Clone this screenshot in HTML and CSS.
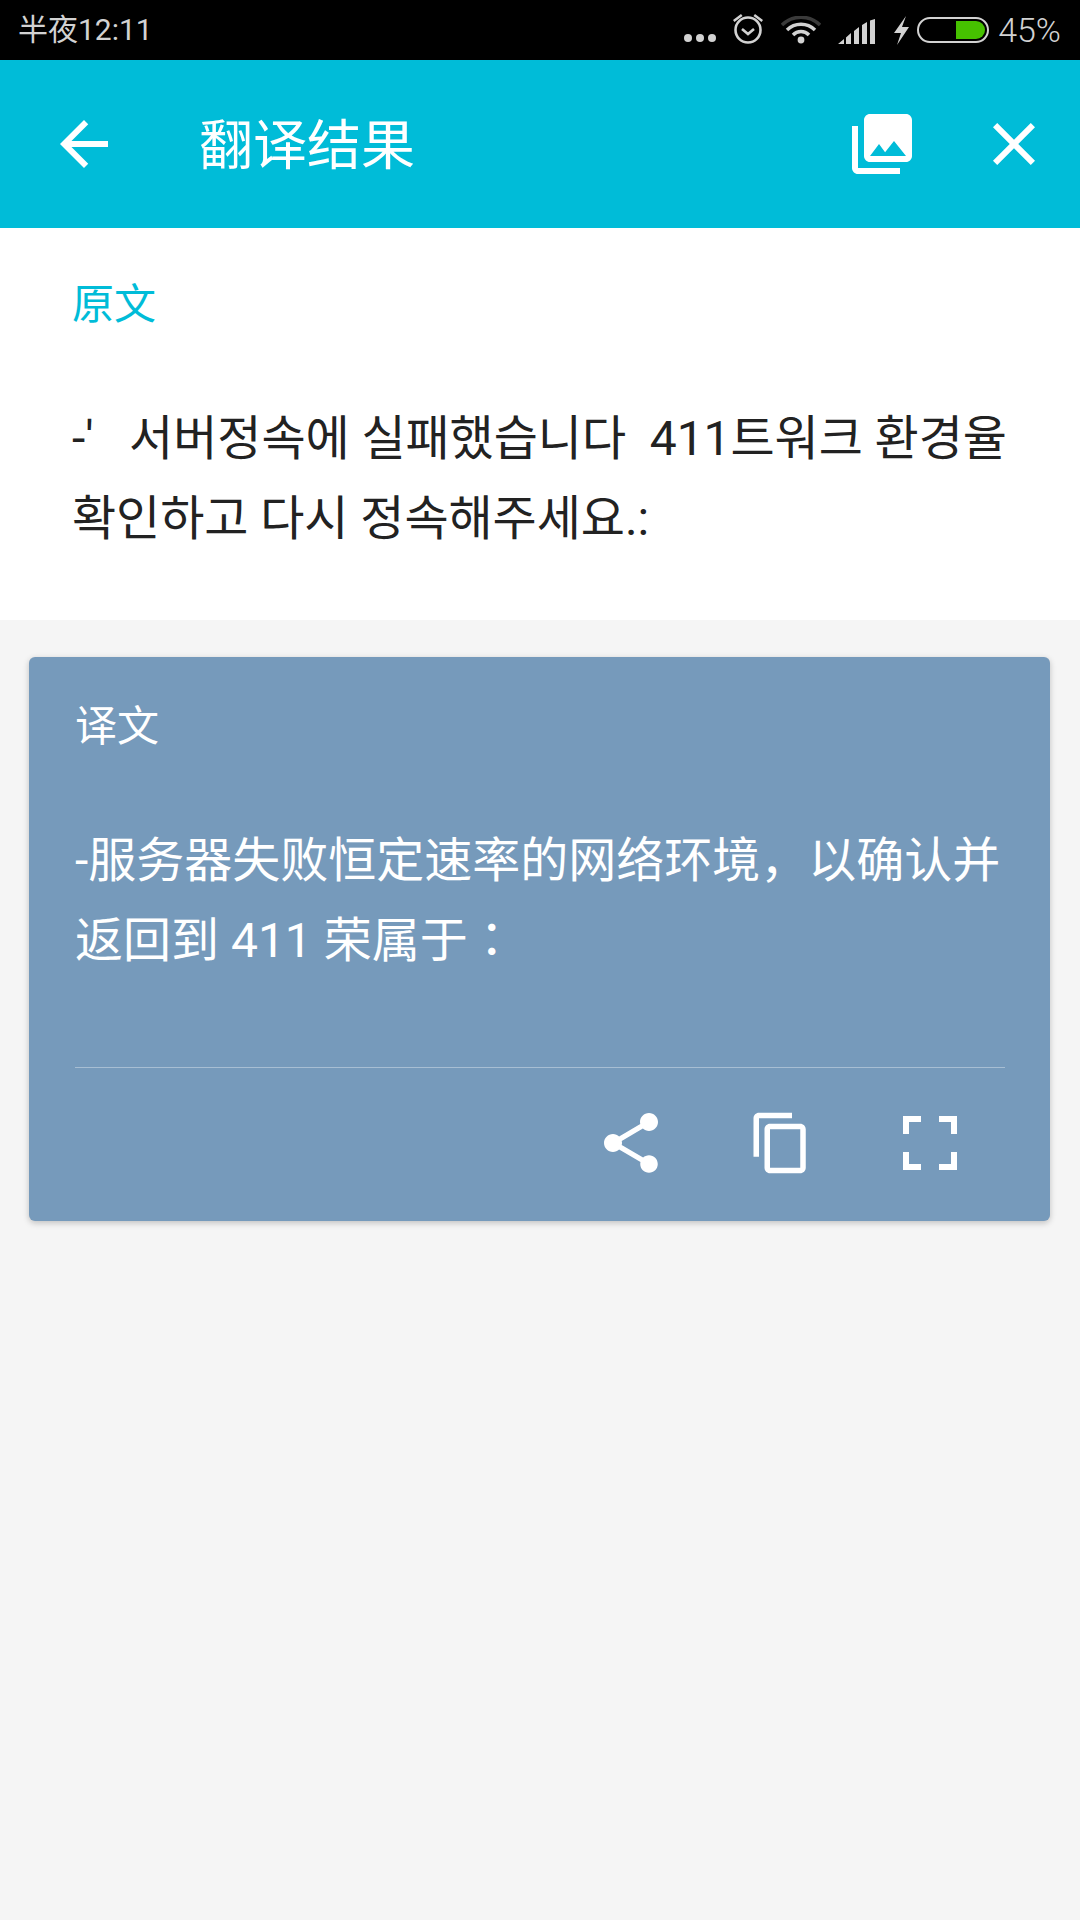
FILE: index.html
```html
<!DOCTYPE html>
<html lang="zh-CN">
<head>
<meta charset="utf-8">
<title>翻译结果</title>
<link rel="stylesheet" href="styles.css">
</head>
<body>
<div class="page">
  <header class="status">
    <span class="time">半夜12:11</span>
    <div class="status-icons">
      <svg class="i-dots" viewBox="0 0 32 8"><circle cx="4" cy="4" r="4"/><circle cx="16" cy="4" r="4"/><circle cx="28" cy="4" r="4"/></svg>
      <svg class="i-alarm" viewBox="0 0 32 32"><circle cx="16" cy="18" r="12.5" fill="none" stroke="#d2d2d2" stroke-width="2.6"/><path d="M10 17l6 5 6-5" fill="none" stroke="#d2d2d2" stroke-width="2.6"/><path d="M1 8l8-6 1.5 2-8 6zM31 8l-8-6-1.5 2 8 6z"/></svg>
      <svg class="i-wifi" viewBox="0 0 40 28"><path d="M1 9A27 27 0 0 1 39 9" fill="none" stroke="#3a3a3a" stroke-width="3.4"/><path d="M6 14A20 20 0 0 1 34 14M12 19A11 11 0 0 1 28 19" fill="none" stroke="#d2d2d2" stroke-width="3.4"/><circle cx="20" cy="24" r="3.4"/></svg>
      <svg class="i-signal" viewBox="0 0 37 25"><path d="M0 25L6 20V25zM8 18.500L13 14V25H8zM16 12L21 8V25H16zM24 6L29 3V25H24zM32 1.500L37 0V25H32z"/></svg>
      <svg class="i-bolt" viewBox="0 0 17 29"><path d="M13 0L1 17H8L4 29L16 11H9z"/></svg>
      <svg class="i-battery" viewBox="0 0 72 26"><rect x="1" y="1" width="70" height="24" rx="12" fill="none" stroke="#d2d2d2" stroke-width="2"/><path d="M39 4H59A9 9 0 0 1 59 22H39z" fill="#46c100"/></svg>
      <span class="pct">45%</span>
    </div>
  </header>

  <nav class="toolbar">
    <svg class="tb-icon back" viewBox="0 0 24 24"><path d="M20 11H7.830l5.590-5.590L12 4l-8 8 8 8 1.410-1.410L7.830 13H20v-2z"/></svg>
    <h1 class="title">翻译结果</h1>
    <svg class="tb-icon gallery" viewBox="0 0 24 24"><path d="M22 16V4c0-1.100-.9-2-2-2H8c-1.100 0-2 .9-2 2v12c0 1.100.9 2 2 2h12c1.100 0 2-.9 2-2zm-11-4l2.030 2.710L16 11l4 5H8l3-4zM2 6v14c0 1.100.9 2 2 2h14v-2H4V6H2z"/></svg>
    <svg class="tb-icon close" viewBox="0 0 24 24"><path d="M19 6.410L17.590 5 12 10.590 6.410 5 5 6.410 10.590 12 5 17.590 6.410 19 12 13.410 17.590 19 19 17.590 13.410 12z"/></svg>
  </nav>

  <section class="source">
    <div class="label label-source">原文</div>
    <div class="text-ko">
      <div class="line">-'   서버정속에 실패했습니다  411트워크 환경율</div>
      <div class="line">확인하고 다시 정속해주세요.:</div>
    </div>
  </section>

  <main class="content">
    <article class="card">
      <div class="label">译文</div>
      <div class="text-zh">
        <div class="line">-服务器失败恒定速率的网络环境，以确认并</div>
        <div class="line">返回到 411 荣属于<span class="colon" lang="zh-TW">：</span></div>
      </div>
      <div class="divider"></div>
      <div class="actions">
        <svg class="a-share" viewBox="0 0 24 24"><path d="M18 16.080c-.76 0-1.440.3-1.960.77L8.910 12.700c.05-.23.09-.46.09-.7s-.04-.47-.09-.7l7.050-4.110c.54.5 1.250.81 2.040.81 1.660 0 3-1.340 3-3s-1.340-3-3-3-3 1.340-3 3c0 .24.04.47.09.7L8.040 9.810C7.500 9.310 6.790 9 6 9c-1.660 0-3 1.340-3 3s1.340 3 3 3c.79 0 1.500-.31 2.040-.81l7.120 4.160c-.05.21-.08.43-.08.65 0 1.610 1.310 2.920 2.920 2.920 1.610 0 2.920-1.310 2.920-2.920s-1.310-2.920-2.920-2.920z"/></svg>
        <svg class="a-copy" viewBox="0 0 24 24"><path d="M16 1H4c-1.100 0-2 .9-2 2v14h2V3h12V1zm3 4H8c-1.100 0-2 .9-2 2v14c0 1.100.9 2 2 2h11c1.100 0 2-.9 2-2V7c0-1.100-.9-2-2-2zm0 16H8V7h11v14z"/></svg>
        <svg class="a-full" viewBox="0 0 54 54"><path d="M0 18H6V6H18V0H0zM36 0V6H48V18H54V0zM0 36V54H18V48H6V36zM48 36V48H36V54H54V36z"/></svg>
      </div>
    </article>
  </main>
</div>
</body>
</html>
```

FILE: styles.css
```css
* { box-sizing: border-box; }
html, body { margin: 0; padding: 0; }
body {
  width: 1080px;
  height: 1920px;
  overflow: hidden;
  background: #f5f5f5;
  font-family: Roboto, "Noto Sans CJK SC", sans-serif;
}
.page { display: flex; flex-direction: column; height: 1920px; }

.status {
  height: 60px;
  background: #000;
  color: #d2d2d2;
  display: flex;
  align-items: center;
  justify-content: space-between;
  padding: 0 19px 0 18px;
}
.time { font-size: 30px; line-height: 60px; }
.status-icons { display: flex; align-items: center; }
.status-icons svg { fill: #d2d2d2; display: block; flex: none; }
.pct { font-size: 34px; line-height: 60px; margin-left: 9px; font-weight: 300; }
.i-dots { width: 32px; height: 8px; margin-top: 16px; }
.i-alarm { width: 32px; height: 32px; margin-left: 16px; margin-top: -4px; }
.i-wifi { width: 40px; height: 28px; margin-left: 17px; }
.i-signal { width: 37px; height: 25px; margin-left: 17px; margin-top: 2px; }
.i-bolt { width: 17px; height: 29px; margin-left: 18px; }
.i-battery { width: 72px; height: 26px; margin-left: 7px; }

.toolbar {
  height: 168px;
  background: #00bcd8;
  display: flex;
  align-items: center;
  color: #fff;
  padding-left: 46px;
}
.tb-icon { width: 72px; height: 72px; fill: #fff; flex: none; display: block; }
.back { margin-left: 2px; }
.title {
  margin: 0 0 0 79px;
  flex: 1;
  font-size: 54px;
  font-weight: 400;
  font-family: "Noto Sans CJK SC", sans-serif;
  line-height: 72px;
  transform: translateY(-2px);
}
.close { margin: 0 30px 0 60px; }

.source {
  background: #fff;
  height: 392px;
  padding: 45px 60px 0 72px;
  color: #222;
}
.label { font-size: 42px; line-height: 56px; font-family: "Noto Sans CJK SC", sans-serif; font-weight: 400; }
.label-source { color: #00bcd8; }
.text-ko {
  margin-top: 70px;
  font-size: 48px;
  line-height: 80px;
  letter-spacing: -.06px;
  font-family: Roboto, "Noto Sans CJK KR", sans-serif;
}
.line { white-space: pre; }

.content { flex: 1; padding: 37px 30px 0 29px; }
.card {
  height: 564px;
  background: #769abb;
  border-radius: 6px;
  box-shadow: 0 2px 6px rgba(0,0,0,.22);
  color: #fff;
  padding: 38px 45px 0 46px;
}
.text-zh {
  margin-top: 70px;
  font-size: 48px;
  line-height: 80px;
  font-family: Roboto, "Noto Sans CJK SC", sans-serif;
}
.colon { font-family: "Noto Sans CJK TC", sans-serif; line-height: 0; }
.divider {
  margin: 86px 0 0 0;
  height: 1px;
  background: rgba(255,255,255,.36);
}
.actions {
  display: flex;
  justify-content: flex-end;
  align-items: center;
  height: 150px;
  padding-right: 48px;
}
.actions svg { fill: #fff; display: block; flex: none; }
.a-share { width: 72px; height: 72px; margin-right: 1px; }
.a-copy { width: 66px; height: 66px; margin-left: 80px; }
.a-full { width: 54px; height: 54px; margin-left: 89px; }
```
